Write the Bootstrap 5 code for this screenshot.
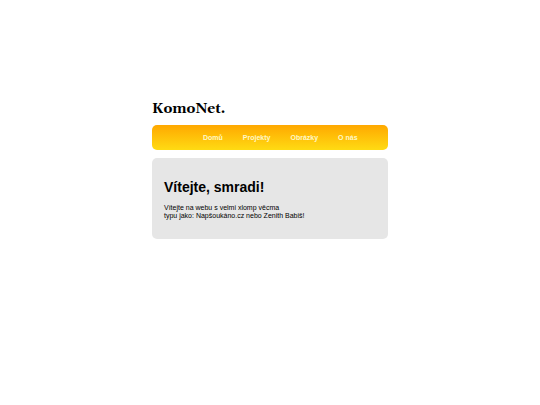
<!DOCTYPE html>
<html lang="cs">
<head>
<meta charset="utf-8">
<meta name="viewport" content="width=device-width, initial-scale=1">
<title>KomoNet.</title>
<link href="https://cdn.jsdelivr.net/npm/bootstrap@5.3.0/dist/css/bootstrap.min.css" rel="stylesheet">
<style>
body { font-family: "Liberation Sans", Arial, sans-serif; font-size: 7px; line-height: 8px; color: #000; }
.site { max-width: 236px; padding-top: 101px; }
.site-title { font-family: Georgia, Gelasio, "Liberation Serif", serif; font-size: 14px; line-height: 17px; margin-bottom: 7px; }
.site-menu { background: linear-gradient(#ffa800, #ffdb13); border-radius: 5px; padding: 8px 20px 8px 51px; margin-bottom: 8px; gap: 20px; }
.site-menu a { color: #fff8c8; line-height: 9px; }
.panel { background: #e6e6e6; border-radius: 5px; padding: 21px 12px 19px; }
.panel h2 { font-size: 14px; line-height: 16px; margin-bottom: 9px; }
</style>
</head>
<body>
<div class="site mx-auto">
  <header><h1 class="site-title fw-bold">KomoNet.</h1></header>
  <nav class="site-menu d-flex">
    <a class="text-decoration-none fw-bold" href="#">Domů</a>
    <a class="text-decoration-none fw-bold" href="#">Projekty</a>
    <a class="text-decoration-none fw-bold" href="#">Obrázky</a>
    <a class="text-decoration-none fw-bold" href="#">O nás</a>
  </nav>
  <main class="panel">
    <h2 class="fw-bold">Vítejte, smradi!</h2>
    <p class="mb-0">Vítejte na webu s velmi xlomp věcma<br>typu jako: Napšoukáno.cz nebo Zenith Babiš!</p>
  </main>
</div>
<script src="https://cdn.jsdelivr.net/npm/bootstrap@5.3.0/dist/js/bootstrap.bundle.min.js"></script>
</body>
</html>
